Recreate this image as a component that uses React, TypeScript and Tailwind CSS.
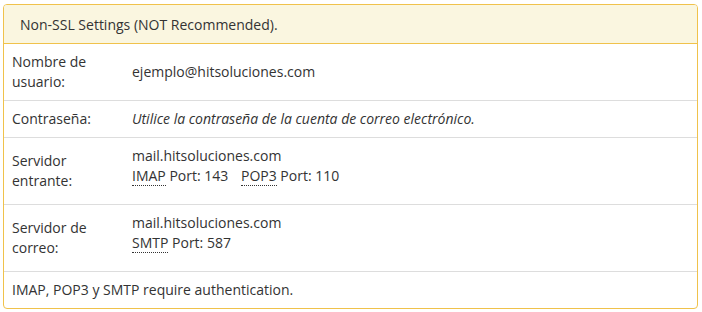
const Abbr = ({ children }: { children: React.ReactNode }) => (
  <abbr className="no-underline border-b border-dotted border-[#333] cursor-help">{children}</abbr>
);

const rows = [
  {
    label: "Nombre de usuario:",
    value: <span>ejemplo@hitsoluciones.com</span>,
  },
  {
    label: "Contraseña:",
    value: <em>Utilice la contraseña de la cuenta de correo electrónico.</em>,
  },
  {
    label: "Servidor entrante:",
    value: (
      <div className="pb-[10px]">
        mail.hitsoluciones.com
        <br />
        <Abbr>IMAP</Abbr> Port: 143 <span className="ml-[9px]"><Abbr>POP3</Abbr> Port: 110</span>
      </div>
    ),
  },
  {
    label: "Servidor de correo:",
    value: (
      <div className="pb-[10px]">
        mail.hitsoluciones.com
        <br />
        <Abbr>SMTP</Abbr> Port: 587
      </div>
    ),
  },
];

export default function App() {
  return (
    <div className="w-[702px] h-[312px] bg-white pt-[4px] pl-[3px] font-['Open_Sans',sans-serif] text-[14px] leading-[20px] text-[#333]">
      <div className="w-[695px] rounded-[4px] border border-[#f0c24b] bg-white overflow-hidden">
        <div className="h-[39px] flex items-center px-[16px] pt-[1px] bg-[#faf6e0] border-b border-[#f0c24b]">
          Non-SSL Settings (NOT Recommended).
        </div>
        <table className="w-full border-collapse">
          <tbody>
            {rows.map((row, i) => (
              <tr key={i} className={i > 0 ? "border-t border-[#ddd]" : ""}>
                <td className="w-[120px] p-[8px] pr-[4px] align-middle">{row.label}</td>
                <td className="p-[8px] align-middle">{row.value}</td>
              </tr>
            ))}
            <tr className="border-t border-[#ddd]">
              <td colSpan={2} className="p-[8px]">
                IMAP, POP3 y SMTP require authentication.
              </td>
            </tr>
          </tbody>
        </table>
      </div>
    </div>
  );
}
